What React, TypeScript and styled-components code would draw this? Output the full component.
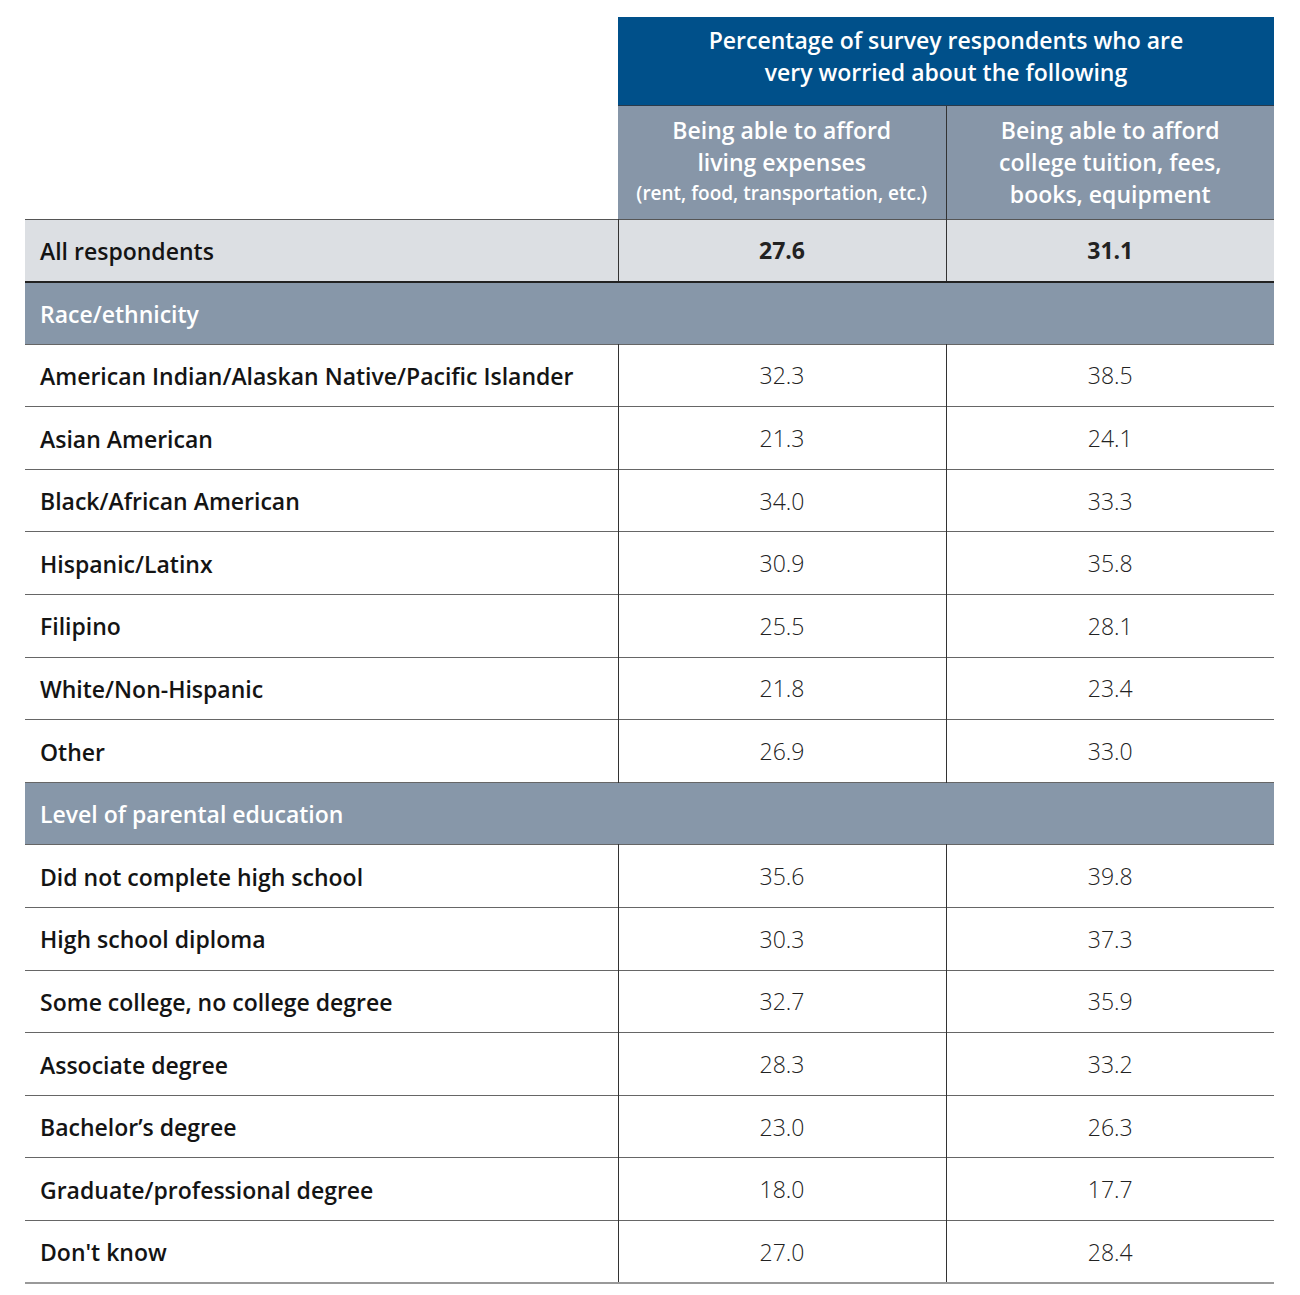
import styled, { createGlobalStyle } from 'styled-components';

const GlobalStyle = createGlobalStyle`
  body {
    margin: 0;
    background: #ffffff;
    font-family: "Open Sans", Lato, "Liberation Sans", sans-serif;
  }
`;

const Page = styled.div`
  padding: 17px 26px 12px 25px;
`;

const Table = styled.table`
  width: 1249px;
  border-collapse: collapse;
  table-layout: fixed;
  color: #1a1a1a;
`;

const BlankCell = styled.th`
  background: #ffffff;
`;

const TitleCell = styled.th`
  background: #00508a;
  color: #ffffff;
  font-size: 23px;
  font-weight: 600;
  line-height: 32px;
  height: 88px;
  padding: 2px 10px 12px;
  box-sizing: border-box;
  border-bottom: 1px solid #2a3a4a;
`;

const SubCell = styled.th`
  background: #8796a8;
  color: #ffffff;
  font-size: 23px;
  font-weight: 600;
  line-height: 32px;
  height: 114px;
  padding: 0 8px;
  box-sizing: border-box;
  & + & {
    border-left: 1px solid #333;
  }
`;

const Note = styled.span`
  display: block;
  font-size: 19px;
  line-height: 30px;
  padding-bottom: 2px;
  font-weight: 600;
  white-space: nowrap;
`;

const Row = styled.tr<{ $variant?: 'total' | 'section' }>`
  height: 62.6px;
  background: ${p => (p.$variant === 'total' ? '#dcdfe3' : p.$variant === 'section' ? '#8797a9' : '#ffffff')};
  border-top: 1px solid ${p => (p.$variant === 'total' ? '#555' : '#666')};
  border-bottom: ${p => (p.$variant === 'total' ? '2px solid #222' : '1px solid #666')};
  &:last-child {
    border-bottom: 2px solid #999;
  }
`;

const Label = styled.td<{ $light?: boolean }>`
  padding: 1px 15px 0;
  font-size: 23px;
  font-weight: 600;
  color: ${p => (p.$light ? '#ffffff' : '#141414')};
  white-space: nowrap;
`;

const Value = styled.td<{ $bold?: boolean }>`
  text-align: center;
  padding-top: 1px;
  font-size: 23px;
  font-weight: ${p => (p.$bold ? 700 : 300)};
  color: #222;
  border-left: 1px solid #333;
`;

type Item = { label: string; a: string; b: string };

const race: Item[] = [
  { label: 'American Indian/Alaskan Native/Pacific Islander', a: '32.3', b: '38.5' },
  { label: 'Asian American', a: '21.3', b: '24.1' },
  { label: 'Black/African American', a: '34.0', b: '33.3' },
  { label: 'Hispanic/Latinx', a: '30.9', b: '35.8' },
  { label: 'Filipino', a: '25.5', b: '28.1' },
  { label: 'White/Non-Hispanic', a: '21.8', b: '23.4' },
  { label: 'Other', a: '26.9', b: '33.0' },
];

const education: Item[] = [
  { label: 'Did not complete high school', a: '35.6', b: '39.8' },
  { label: 'High school diploma', a: '30.3', b: '37.3' },
  { label: 'Some college, no college degree', a: '32.7', b: '35.9' },
  { label: 'Associate degree', a: '28.3', b: '33.2' },
  { label: 'Bachelor\u2019s degree', a: '23.0', b: '26.3' },
  { label: 'Graduate/professional degree', a: '18.0', b: '17.7' },
  { label: "Don't know", a: '27.0', b: '28.4' },
];

function Section({ title, items }: { title: string; items: Item[] }) {
  return (
    <>
      <Row $variant="section">
        <Label $light colSpan={3}>{title}</Label>
      </Row>
      {items.map(it => (
        <Row key={it.label}>
          <Label>{it.label}</Label>
          <Value>{it.a}</Value>
          <Value>{it.b}</Value>
        </Row>
      ))}
    </>
  );
}

export default function App() {
  return (
    <Page>
      <GlobalStyle />
      <Table>
        <colgroup>
          <col style={{ width: 593 }} />
          <col style={{ width: 328 }} />
          <col style={{ width: 328 }} />
        </colgroup>
        <thead>
          <tr>
            <BlankCell rowSpan={2} />
            <TitleCell colSpan={2}>
              Percentage of survey respondents who are
              <br />
              very worried about the following
            </TitleCell>
          </tr>
          <tr>
            <SubCell>
              Being able to afford
              <br />
              living expenses
              <Note>(rent, food, transportation, etc.)</Note>
            </SubCell>
            <SubCell>
              Being able to afford
              <br />
              college tuition, fees,
              <br />
              books, equipment
            </SubCell>
          </tr>
        </thead>
        <tbody>
          <Row $variant="total">
            <Label>All respondents</Label>
            <Value $bold>27.6</Value>
            <Value $bold>31.1</Value>
          </Row>
          <Section title="Race/ethnicity" items={race} />
          <Section title="Level of parental education" items={education} />
        </tbody>
      </Table>
    </Page>
  );
}
